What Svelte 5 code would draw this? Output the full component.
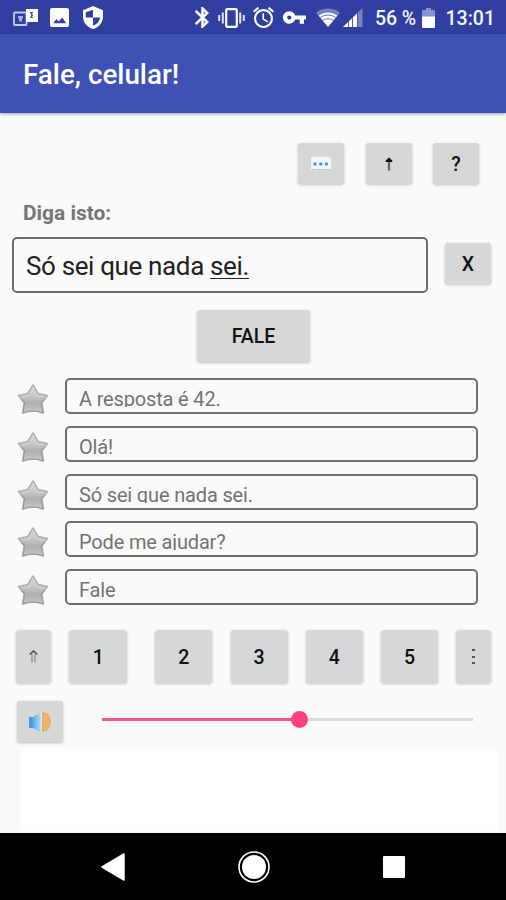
<script lang="ts">
  let text = 'Só sei que nada ';
  let composing = 'sei.';
  let volume = 53.2;

  const history = ['A resposta é 42.', 'Olá!', 'Só sei que nada sei.', 'Pode me ajudar?', 'Fale'];
  const slots = ['1', '2', '3', '4', '5'];
</script>

<div class="screen">
  <!-- Status bar -->
  <header class="status">
    <svg class="cards" width="26" height="20" viewBox="0 0 26 20">
      <rect x="1" y="4.5" width="12.5" height="12.5" rx="1" fill="none" stroke="#c3caee" stroke-width="1.8" />
      <path d="M5 8h5v2.5H9v3H6v-3H5z" fill="#a3addf" />
      <path d="M13 1h12v13H13z" fill="#fff" />
      <path d="M17 4h3v1.500h-1v1h1V8h-1v1h1v1h-3V8.500h1v-3h-1z" fill="#4a58ae" />
    </svg>
    <svg class="image" width="19" height="19" viewBox="3 3 18 18">
      <path fill="#fff" d="M21 19V5c0-1.100-.9-2-2-2H5c-1.100 0-2 .9-2 2v14c0 1.100.9 2 2 2h14c1.100 0 2-.9 2-2zM6 17.500l3-4 2.200 2.200 3.300-3.700 4 5.500z" />
    </svg>
    <svg class="shield" width="20" height="23" viewBox="3 1 18 22" preserveAspectRatio="none">
      <path fill="#fff" d="M12 1L3 5v6c0 5.550 3.840 10.740 9 12 5.160-1.260 9-6.450 9-12V5l-9-4z" />
      <path fill="#303f9f" d="M12 4.500V12h6.500c-.5 3.500-3 6.500-6.500 7.700V12H5.500V7z" />
    </svg>
    <svg class="bluetooth" width="14" height="21" viewBox="5 2 13 20" preserveAspectRatio="none">
      <path fill="#fff" stroke="#fff" stroke-width=".5" d="M17.710 7.710L12 2h-1v7.590L6.410 5 5 6.410 10.590 12 5 17.590 6.410 19 11 14.410V22h1l5.710-5.710-4.300-4.290 4.300-4.290zM13 5.830l1.880 1.880L13 9.590V5.830zm1.880 10.460L13 18.170v-3.760l1.880 1.880z" />
    </svg>
    <svg class="vibrate" width="27" height="20" viewBox="0 0 27 20">
      <rect x="8.2" y="1.2" width="10.6" height="17.6" rx="1" fill="none" stroke="#fff" stroke-width="2.2" />
      <path d="M4.800 4.500v11M22.200 4.500v11M1.200 7v6M25.800 7v6" stroke="#dfe3f8" stroke-width="2" />
    </svg>
    <svg class="alarm" width="21" height="21" viewBox="2 2 20 20">
      <path fill="#fff" d="M22 5.720l-4.600-3.860-1.290 1.530 4.600 3.860L22 5.720zM7.880 3.390L6.600 1.860 2 5.710l1.290 1.530 4.590-3.850zM12.500 8H11v6l4.750 2.850.75-1.230-4-2.370V8zM12 4c-4.970 0-9 4.030-9 9s4.020 9 9 9c4.970 0 9-4.030 9-9s-4.030-9-9-9zm0 16c-3.870 0-7-3.130-7-7s3.130-7 7-7 7 3.130 7 7-3.130 7-7 7z" />
    </svg>
    <svg class="key" width="23" height="13" viewBox="1 6 22 12">
      <path fill="#fff" d="M12.650 10C11.830 7.670 9.610 6 7 6c-3.310 0-6 2.690-6 6s2.690 6 6 6c2.610 0 4.830-1.670 5.650-4H17v4h4v-4h2v-4H12.650zM7 14c-1.100 0-2-.9-2-2s.9-2 2-2 2 .9 2 2-.9 2-2 2z" />
    </svg>
    <svg class="wifi" width="24" height="19" viewBox="0 0 24 19">
      <path d="M0 4.500Q12-3.500 24 4.500L12 19z" fill="#7883c6" />
      <path d="M2.500 7.500Q12 1.500 21.500 7.500L12 19z" fill="#fff" />
      <path d="M4 9.500Q12 4.500 20 9.500M6.500 12.500Q12 9 17.500 12.500" fill="none" stroke="#6c78c0" stroke-width="1" />
    </svg>
    <svg class="signal" width="20" height="19" viewBox="0 0 20 19">
      <path d="M19.500 0v19H0z" fill="#7782c5" />
      <path d="M14 5.500V19H0z" fill="#fff" />
      <path d="M5.500 13v6M9.500 9v10M14.500 4v15" stroke="#4b59ae" stroke-width="1" />
    </svg>
    <span class="percent">56 %</span>
    <svg class="battery" width="13" height="20" viewBox="0 0 13 20">
      <path d="M4 0h5v2h3.200l.8.800V9H0V2.800L.8 2H4z" fill="#8993cf" />
      <path d="M0 8.500h13v10.700l-.8.800H.8l-.8-.8z" fill="#fff" />
    </svg>
    <time>13:01</time>
  </header>

  <!-- App bar -->
  <div class="appbar">
    <h1>Fale, celular!</h1>
  </div>

  <main>
    <div class="tools">
      <button class="btn small" aria-label="Frases">
        <svg width="20" height="15" viewBox="0 0 20 15">
          <path d="M1 0h18l1 1v11l-1 1H8l-3 1.500V13H1l-1-1V1z" fill="#f2f5f8" />
          <path d="M1 12.500h18" stroke="#c5cacc" />
          <g fill="#3c92d2">
            <rect x="2.5" y="5.5" width="3" height="3" rx="1" />
            <rect x="8.3" y="5.5" width="3" height="3" rx="1" />
            <rect x="14" y="5.5" width="3" height="3" rx="1" />
          </g>
        </svg>
      </button>
      <button class="btn small" aria-label="Subir">
        <svg width="8" height="14" viewBox="0 0 8 14">
          <path d="M4 3v10.500" stroke="#666" stroke-width="2.4" />
          <path d="M4 .5l3.300 3V5H.7V3.500z" fill="#111" />
        </svg>
      </button>
      <button class="btn small">?</button>
    </div>

    <label class="say" for="phrase">Diga isto:</label>
    <div class="entry">
      <div class="phrase" id="phrase">{text}<u>{composing}</u></div>
      <button class="btn small">X</button>
    </div>

    <button class="btn speak">FALE</button>

    <!-- Last phrases -->
    <ul class="history">
      {#each history as item}
        <li>
          <svg class="star" width="32" height="32" viewBox="0 0 32 32">
            <defs>
              <linearGradient id="steel" x1="0" y1="0" x2="0" y2="1">
                <stop offset="0" stop-color="#e6e6e6" />
                <stop offset=".65" stop-color="#b0b0b0" />
                <stop offset="1" stop-color="#c8c8c8" />
              </linearGradient>
            </defs>
            <path
              d="M16 2l5.200 8.500 9.500 2-6 7.300 1.700 10.200Q21 28 16 28T5.600 30L7.300 19.800l-6-7.300 9.500-2z"
              fill="url(#steel)"
              stroke="#b2b2b2"
              stroke-width="1.5"
              stroke-linejoin="round"
            />
            <path d="M5 14.300l7.200-1.300L16 6.500l3.800 6.500 7.200 1.300" fill="none" stroke="#d2d2d2" stroke-width="1.2" />
            <path d="M5.800 29.800l1.700-10-3-3.500M26.200 29.800l-1.700-10 3-3.500M5.800 30Q11 28 16 28t10.200 2" fill="none" stroke="#989898" stroke-width="1.2" />
          </svg>
          <div class="item"><span>{item}</span></div>
        </li>
      {/each}
    </ul>

    <!-- Phrase slots -->
    <div class="slots">
      <button class="btn narrow" aria-label="Guardar">
        <svg width="9" height="13" viewBox="0 0 9 13">
          <path d="M3 4v8.500M6 4v8.500" stroke="#888" stroke-width="1.2" />
          <path d="M.8 4.500L4.500 1l3.700 3.500" fill="none" stroke="#444" stroke-width="1.5" />
        </svg>
      </button>
      {#each slots as slot}
        <button class="btn slot">{slot}</button>
      {/each}
      <button class="btn narrow" aria-label="Mais">
        <svg width="3" height="16" viewBox="0 0 3 16">
          <path d="M0 0h3v2H0zM0 7h3v2H0zM0 13h3v2H0z" fill="#555" />
        </svg>
      </button>
    </div>

    <div class="volume">
      <button class="btn small" aria-label="Volume">
        <svg width="24" height="22" viewBox="0 0 24 22">
          <defs>
            <linearGradient id="cone" x1="0" y1="0" x2="1" y2="0">
              <stop offset="0" stop-color="#2f8fe0" />
              <stop offset="1" stop-color="#b4dcf8" />
            </linearGradient>
          </defs>
          <path d="M13.500 1c5.500 0 9.500 4 9.500 10s-4 10-9.500 10z" fill="#e9ae62" />
          <path d="M17 4v14M20 6v10" stroke="#f0c48a" stroke-width="1" stroke-dasharray="2 1" />
          <path d="M1 6h4l8-5.500v21L5 17H1z" fill="url(#cone)" />
          <path d="M1 6h3.500v11H1z" fill="#4a9be0" />
          <path d="M13.300 1v20" stroke="#e8f3fa" stroke-width="1" />
        </svg>
      </button>
      <div class="track">
        <div class="fill" style="width: {volume}%"></div>
        <div class="thumb" style="left: {volume}%"></div>
      </div>
    </div>

    <div class="panel"></div>
  </main>

  <!-- Navigation bar -->
  <nav>
    <svg width="24" height="28" viewBox="0 0 24 28">
      <path d="M23 1v26L1 14z" fill="#fff" stroke="#fff" stroke-width="1.5" stroke-linejoin="round" />
    </svg>
    <svg width="32" height="32" viewBox="0 0 32 32">
      <circle cx="16" cy="16" r="15" fill="none" stroke="#fff" stroke-width="1.6" />
      <circle cx="16" cy="16" r="12" fill="#fff" />
    </svg>
    <svg width="22" height="22" viewBox="0 0 22 22">
      <rect width="22" height="22" rx="1" fill="#fff" />
    </svg>
  </nav>
</div>

<style>
  :global(body) {
    background: #fafafa;
  }

  .screen {
    display: flex;
    flex-direction: column;
    width: 506px;
    height: 900px;
    overflow: hidden;
    background: #fafafa;
    font-family: Roboto, "Noto Sans", sans-serif;
  }

  svg {
    display: block;
    flex: none;
  }

  /* Status bar */
  .status {
    display: flex;
    align-items: center;
    flex: none;
    height: 34px;
    padding: 1px 11px 0 13px;
    box-sizing: border-box;
    background: #303f9f;
    color: #f3f4fc;
    font-size: 19.5px;
    font-weight: 500;
    white-space: nowrap;
  }

  .status span,
  .status time {
    padding-top: 2px;
  }

  .image {
    margin-left: 11px;
  }

  .shield {
    margin-left: 14px;
  }

  .bluetooth {
    margin-left: 92px;
  }

  .vibrate {
    margin-left: 9px;
  }

  .alarm {
    margin-left: 8px;
  }

  .key {
    margin-left: 9px;
  }

  .wifi {
    margin-left: 10px;
  }

  .signal {
    margin-left: 3px;
  }

  .percent {
    margin-left: 12px;
    letter-spacing: -0.1px;
  }

  .battery {
    margin-left: auto;
    margin-right: 11px;
  }

  /* App bar */
  .appbar {
    display: flex;
    align-items: center;
    flex: none;
    height: 79px;
    padding-left: 23px;
    background: #3f51b5;
    box-shadow: 0 1px 3px rgba(0, 0, 0, 0.35);
  }

  h1 {
    margin: 2px 0 0;
    color: #fff;
    font-size: 27.8px;
    font-weight: 500;
  }

  main {
    display: flex;
    flex-direction: column;
    flex: 1;
    min-height: 0;
  }

  .btn {
    display: flex;
    align-items: center;
    justify-content: center;
    flex: none;
    padding: 0;
    border: 0;
    border-radius: 3px;
    background: #d6d7d7;
    box-shadow: 0 1px 3px rgba(0, 0, 0, 0.24);
    color: #111;
    font-family: inherit;
    font-size: 19.5px;
    font-weight: 500;
  }

  .small {
    width: 46px;
    height: 41px;
    padding-top: 1px;
  }

  .tools {
    display: flex;
    justify-content: flex-end;
    gap: 21.5px;
    padding: 30px 27px 0 0;
  }

  .say {
    margin: 17px 0 0 23px;
    height: 24px;
    line-height: 24px;
    color: #757575;
    font-size: 20.9px;
    font-weight: 700;
  }

  .entry {
    display: flex;
    align-items: flex-start;
    gap: 17px;
    margin: 12px 0 0 12px;
  }

  .entry .btn {
    margin-top: 6px;
  }

  .phrase {
    width: 416px;
    height: 56px;
    padding-left: 12px;
    box-sizing: border-box;
    border: 2px solid #6e6e6e;
    border-radius: 5px;
    color: #212121;
    font-size: 26px;
    letter-spacing: -0.36px;
    line-height: 54px;
    white-space: pre;
  }

  .phrase u {
    text-decoration-thickness: 1px;
    text-underline-offset: 3px;
    text-decoration-skip-ink: none;
  }

  .speak {
    width: 113px;
    height: 52px;
    margin: 17px 0 0 197px;
  }

  /* History */
  .history {
    display: flex;
    flex-direction: column;
    gap: 11.75px;
    margin: 16px 0 0;
    padding: 0 0 0 17px;
    list-style: none;
  }

  .history li {
    display: flex;
    gap: 16px;
    height: 36px;
  }

  .star {
    margin-top: 5px;
  }

  .item {
    width: 413px;
    height: 36px;
    padding: 7px 12px 0 12px;
    box-sizing: border-box;
    border: 2px solid #707070;
    border-radius: 5px;
    color: #737373;
    font-size: 20px;
    letter-spacing: -0.16px;
    line-height: 24px;
  }

  .item span {
    display: block;
    height: 20px;
    overflow: hidden;
  }

  /* Slots */
  .slots {
    display: flex;
    gap: 18.2px;
    margin: 25px 0 0 16px;
  }

  .narrow {
    width: 35px;
    height: 53px;
  }

  .slot {
    width: 57px;
    height: 53px;
    padding-top: 1px;
  }

  .slot:nth-child(2) {
    width: 58px;
    margin-right: 10px;
  }

  /* Volume */
  .volume {
    display: flex;
    align-items: center;
    gap: 39px;
    margin: 18px 0 0 17px;
  }

  .track {
    position: relative;
    width: 371px;
    height: 3px;
    margin-bottom: 4px;
    background: #dadada;
  }

  .fill {
    height: 3px;
    background: #f9568c;
  }

  .thumb {
    position: absolute;
    top: -7px;
    width: 17px;
    height: 17px;
    margin-left: -8.5px;
    border-radius: 50%;
    background: #ff4081;
  }

  .panel {
    flex: 1;
    margin: 6px 9px 2px 20px;
    background: #fff;
  }

  nav {
    display: flex;
    align-items: center;
    justify-content: space-between;
    flex: none;
    height: 67px;
    padding: 0 101px;
    box-sizing: border-box;
    background: #000;
  }
</style>
